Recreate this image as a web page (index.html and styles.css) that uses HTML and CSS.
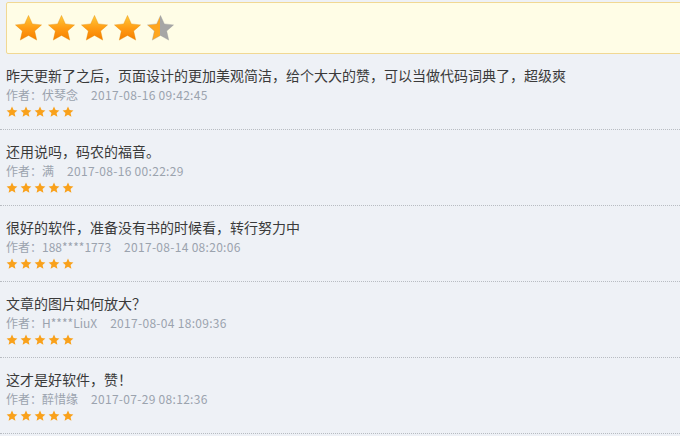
FILE: index.html
```html
<!DOCTYPE html>
<html>

<head>
<meta charset="utf-8">
<title>评论</title>
<link rel="stylesheet" href="styles.css">
</head>

<body>

<svg class="defs" width="0" height="0">
   <defs>
      <linearGradient id="gold" x1="0" y1="0" x2="0" y2="1">
         <stop offset="0" stop-color="#ffc93a"/>
         <stop offset="0.55" stop-color="#ff9a12"/>
         <stop offset="1" stop-color="#f57f00"/>
      </linearGradient>
      <linearGradient id="half" x1="0" y1="0" x2="1" y2="0">
         <stop offset="0.5" stop-color="#ffa61e"/>
         <stop offset="0.5" stop-color="#a6a6a6"/>
      </linearGradient>
      <symbol id="star" viewBox="0 0 24 24">
         <path d="M12 1.2l3.2 7 7.6.8-5.7 5.1 1.7 7.5L12 17.7l-6.8 3.9 1.7-7.5-5.7-5.1 7.6-.8z"/>
      </symbol>
   </defs>
</svg>

<div class="rating">
   <svg class="bigstar gold"><use href="#star"/></svg>
   <svg class="bigstar gold"><use href="#star"/></svg>
   <svg class="bigstar gold"><use href="#star"/></svg>
   <svg class="bigstar gold"><use href="#star"/></svg>
   <svg class="bigstar half"><use href="#star"/></svg>
</div>

<ul class="comments">
   <li class="comment">
      <p class="text">昨天更新了之后，页面设计的更加美观简洁，给个大大的赞，可以当做代码词典了，超级爽</p>
      <p class="meta"><span class="author">作者：伏琴念</span><span class="date">2017-08-16 09:42:45</span></p>
      <div class="stars">
         <svg><use href="#star"/></svg><svg><use href="#star"/></svg><svg><use href="#star"/></svg><svg><use href="#star"/></svg><svg><use href="#star"/></svg>
      </div>
   </li>
   <li class="comment">
      <p class="text">还用说吗，码农的福音。</p>
      <p class="meta"><span class="author">作者：满</span><span class="date">2017-08-16 00:22:29</span></p>
      <div class="stars">
         <svg><use href="#star"/></svg><svg><use href="#star"/></svg><svg><use href="#star"/></svg><svg><use href="#star"/></svg><svg><use href="#star"/></svg>
      </div>
   </li>
   <li class="comment">
      <p class="text">很好的软件，准备没有书的时候看，转行努力中</p>
      <p class="meta"><span class="author">作者：188****1773</span><span class="date">2017-08-14 08:20:06</span></p>
      <div class="stars">
         <svg><use href="#star"/></svg><svg><use href="#star"/></svg><svg><use href="#star"/></svg><svg><use href="#star"/></svg><svg><use href="#star"/></svg>
      </div>
   </li>
   <li class="comment">
      <p class="text">文章的图片如何放大？</p>
      <p class="meta"><span class="author">作者：H****LiuX</span><span class="date">2017-08-04 18:09:36</span></p>
      <div class="stars">
         <svg><use href="#star"/></svg><svg><use href="#star"/></svg><svg><use href="#star"/></svg><svg><use href="#star"/></svg><svg><use href="#star"/></svg>
      </div>
   </li>
   <li class="comment">
      <p class="text">这才是好软件，赞！</p>
      <p class="meta"><span class="author">作者：醉惜缘</span><span class="date">2017-07-29 08:12:36</span></p>
      <div class="stars">
         <svg><use href="#star"/></svg><svg><use href="#star"/></svg><svg><use href="#star"/></svg><svg><use href="#star"/></svg><svg><use href="#star"/></svg>
      </div>
   </li>
</ul>

</body>

</html>
```

FILE: styles.css
```css
html , body {
   margin:0px;
   padding:0px;
}

body {
   background:#eef1f6;
   font-family:"Noto Sans CJK SC", "Noto Sans", sans-serif;
   overflow:hidden;
}

.defs {
   position:absolute;
   width:0px;
   height:0px;
}

.rating {
   display:flex;
   align-items:center;
   gap:4px;

   margin:2px -20px 0px 6px;
   padding:0px 0px 0px 7px;
   height:50px;

   background:#fffde6;
   border:1px solid #f1d893;
   border-radius:2px;
}

.bigstar {
   width:29px;
   height:29px;
   stroke:#e08400;
   stroke-width:0.6px;
   stroke-opacity:0.5;
}

.bigstar.gold {
   fill:url(#gold);
}

.bigstar.half {
   fill:url(#half);
   stroke:#999;
}

.comments {
   list-style:none;
   margin:0px;
   padding:0px;
}

.comment {
   padding:11px 6px 10px 6px;
   border-bottom:1px dotted #b8bcc2;
}

.text {
   margin:0px;
   font-size:14px;
   line-height:20px;
   color:#3a3a3a;
}

.meta {
   margin:0px;
   font-size:12px;
   line-height:20px;
   color:#9ba3ae;
}

.date {
   margin-left:13px;
   letter-spacing:0.3px;
}

.stars {
   display:flex;
   gap:2px;
   height:14px;
   align-items:center;
}

.stars svg {
   width:12px;
   height:12px;
   fill:#f9a11b;
}
```
